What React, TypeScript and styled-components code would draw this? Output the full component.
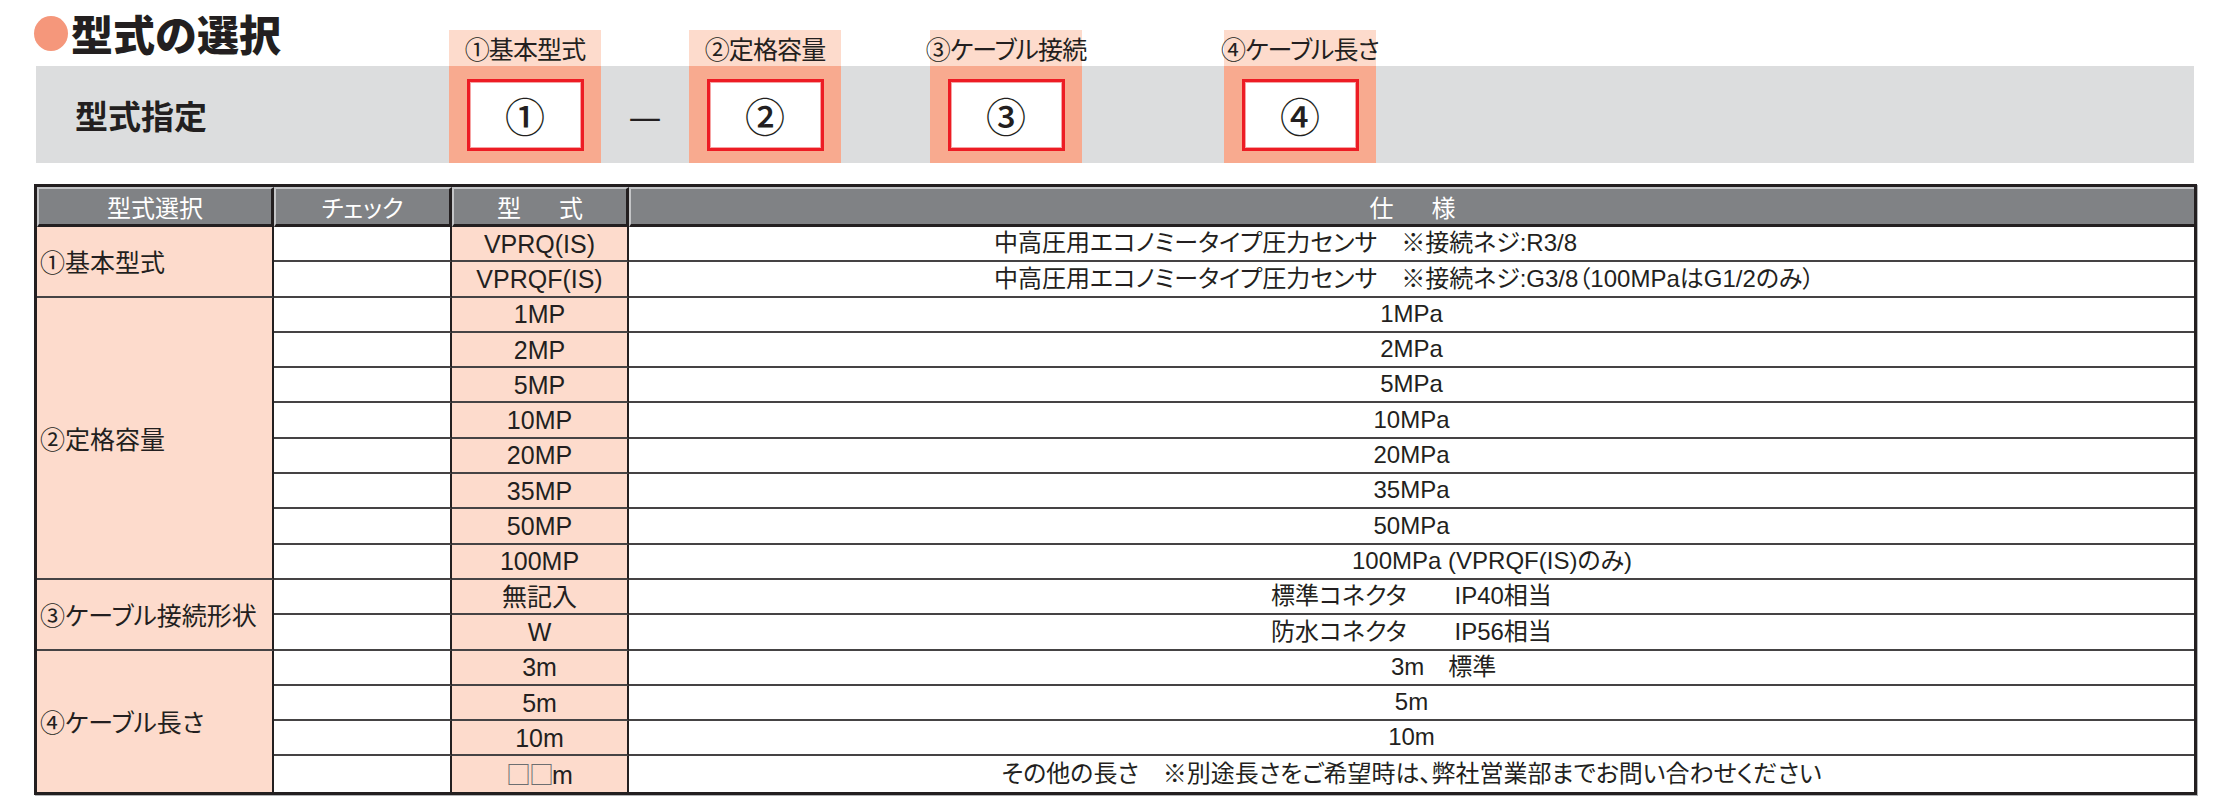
import React from "react";
import styled, { createGlobalStyle } from "styled-components";

const GlobalStyle = createGlobalStyle`
  html, body { margin: 0; padding: 0; background: #ffffff; }
  body {
    font-family: "Liberation Sans", "Noto Sans CJK JP", sans-serif;
    color: #231f20;
    font-feature-settings: "palt" 1;
  }
`;

const Page = styled.div`
  width: 2232px;
  height: 800px;
  overflow: hidden;
`;

const TopRow = styled.div`
  display: flex;
  align-items: flex-end;
  height: 66px;
`;

const TitleBlock = styled.div`
  align-self: stretch;
  width: 449px;
  box-sizing: border-box;
  padding: 0 0 0 34px;
  display: flex;
  align-items: center;
  gap: 3px;
`;

const Bullet = styled.span`
  width: 34px;
  height: 35px;
  border-radius: 50%;
  background: #f5977b;
  flex: none;
`;

const Title = styled.h1`
  margin: 0;
  font-family: "Noto Sans CJK JP", sans-serif;
  font-size: 42px;
  font-weight: 900;
  line-height: 1;
  letter-spacing: 0;
  font-feature-settings: normal;
  color: #231f20;
`;

const Gap = styled.div<{ $w: number }>`
  width: ${(p) => p.$w}px;
  flex: none;
  display: flex;
  align-items: center;
  justify-content: center;
`;

const Tab = styled.div`
  width: 152px;
  height: 36px;
  flex: none;
  background: #fddbcc;
  display: flex;
  align-items: center;
  justify-content: center;
  font-family: "Noto Sans CJK JP", sans-serif;
  font-size: 25px;
  line-height: 1;
  white-space: nowrap;
  letter-spacing: -0.9px;
`;

const Band = styled.div`
  margin-left: 36px;
  width: 2158px;
  height: 97px;
  background: #dcddde;
  display: flex;
`;

const BandLabel = styled.div`
  width: 413px;
  flex: none;
  box-sizing: border-box;
  padding-left: 39px;
  display: flex;
  align-items: center;
  font-family: "Noto Sans CJK JP", sans-serif;
  font-size: 33px;
  font-weight: 700;
  color: #231f20;
`;

const Slot = styled.div`
  width: 152px;
  flex: none;
  background: #f8aa8f;
  display: flex;
  align-items: center;
  justify-content: center;
`;

const NumberBox = styled.div`
  width: 117px;
  height: 72px;
  box-sizing: border-box;
  background: #ffffff;
  border: 3px solid #ed1c24;
  box-shadow: inset 0 0 0 1px #f6a4a4;
  display: flex;
  align-items: center;
  justify-content: center;
  font-family: "Noto Sans CJK JP", sans-serif;
  font-size: 40px;
  font-weight: 500;
  line-height: 1;
  color: #231f20;
`;

const Dash = styled.span`
  font-family: "Noto Sans CJK JP", sans-serif;
  font-size: 37px;
  line-height: 1;
  color: #231f20;
`;

const SpecTable = styled.table`
  margin: 21px 0 0 34px;
  box-sizing: border-box;
  width: 2163px;
  table-layout: fixed;
  border-collapse: separate;
  border-spacing: 0;
  border: 3px solid #231f20;
  box-shadow: 1px 1px 0 #b1b3b5;
`;

const HeadCell = styled.th<{ $last?: boolean }>`
  height: 40px;
  box-sizing: border-box;
  padding: 0;
  background: #808285;
  color: #ffffff;
  font-family: "Noto Sans CJK JP", sans-serif;
  font-size: 24px;
  font-weight: 400;
  line-height: 1;
  text-align: center;
  border-top: 2px solid #c4c5c7;
  border-left: 2px solid #c4c5c7;
  border-bottom: 3px solid #231f20;
  border-right: ${(p) => (p.$last ? "none" : "3px solid #231f20")};
`;

const Spaced = styled.span`
  letter-spacing: 7px;
  margin-right: -7px;
`;

const BodyRow = styled.tr`
  height: 35.3px;
`;

const cellLine = (last?: boolean) => (last ? "none" : "2px solid #454344");

const GroupCell = styled.td<{ $last?: boolean }>`
  background: #fddbcc;
  padding: 0 0 0 3px;
  font-family: "Noto Sans CJK JP", sans-serif;
  font-size: 25px;
  line-height: 1.2;
  text-align: left;
  vertical-align: middle;
  white-space: nowrap;
  border-right: 2px solid #231f20;
  border-bottom: ${(p) => cellLine(p.$last)};
`;

const CheckCell = styled.td<{ $last?: boolean }>`
  background: #ffffff;
  padding: 0;
  border-right: 2px solid #231f20;
  border-bottom: ${(p) => cellLine(p.$last)};
`;

const ModelCell = styled.td<{ $last?: boolean }>`
  background: #fddbcc;
  padding: 0;
  font-size: 25px;
  line-height: 1.2;
  text-align: center;
  vertical-align: middle;
  white-space: nowrap;
  border-right: 2px solid #231f20;
  border-bottom: ${(p) => cellLine(p.$last)};
`;

const Blank = styled.span`
  font-family: "Noto Sans CJK JP", sans-serif;
  font-feature-settings: normal;
  color: #6d6e71;
  font-size: 25px;
  letter-spacing: -2px;
`;

const SpecCell = styled.td<{ $last?: boolean; $indent?: number }>`
  background: #ffffff;
  padding: 0 0 0 ${(p) => p.$indent ?? 0}px;
  font-size: 24px;
  line-height: 1.2;
  text-align: ${(p) => (p.$indent ? "left" : "center")};
  vertical-align: middle;
  white-space: nowrap;
  border-bottom: ${(p) => cellLine(p.$last)};
`;

type Row = { model: React.ReactNode; spec: string; indent?: number };
type Group = { label: string; rows: Row[] };

const groups: Group[] = [
  {
    label: "①基本型式",
    rows: [
      { model: "VPRQ(IS)", spec: "中高圧用エコノミータイプ圧力センサ　※接続ネジ:R3/8", indent: 365 },
      { model: "VPRQF(IS)", spec: "中高圧用エコノミータイプ圧力センサ　※接続ネジ:G3/8（100MPaはG1/2のみ）", indent: 365 },
    ],
  },
  {
    label: "②定格容量",
    rows: [
      { model: "1MP", spec: "1MPa" },
      { model: "2MP", spec: "2MPa" },
      { model: "5MP", spec: "5MPa" },
      { model: "10MP", spec: "10MPa" },
      { model: "20MP", spec: "20MPa" },
      { model: "35MP", spec: "35MPa" },
      { model: "50MP", spec: "50MPa" },
      { model: "100MP", spec: "100MPa (VPRQF(IS)のみ)", indent: 723 },
    ],
  },
  {
    label: "③ケーブル接続形状",
    rows: [
      { model: "無記入", spec: "標準コネクタ　　IP40相当" },
      { model: "W", spec: "防水コネクタ　　IP56相当" },
    ],
  },
  {
    label: "④ケーブル長さ",
    rows: [
      { model: "3m", spec: "3m　標準", indent: 762 },
      { model: "5m", spec: "5m" },
      { model: "10m", spec: "10m" },
      {
        model: (
          <>
            <Blank>□□</Blank>m
          </>
        ),
        spec: "その他の長さ　※別途長さをご希望時は、弊社営業部までお問い合わせください",
      },
    ],
  },
];

const slots = [
  { gap: 0, label: "①基本型式", num: "①" },
  { gap: 88, label: "②定格容量", num: "②", dash: true },
  { gap: 89, label: "③ケーブル接続", num: "③" },
  { gap: 142, label: "④ケーブル長さ", num: "④" },
];

export default function App() {
  return (
    <Page>
      <GlobalStyle />
      <TopRow>
        <TitleBlock>
          <Bullet />
          <Title>型式の選択</Title>
        </TitleBlock>
        {slots.map((s) => (
          <React.Fragment key={s.label}>
            {s.gap > 0 && <Gap $w={s.gap} />}
            <Tab>{s.label}</Tab>
          </React.Fragment>
        ))}
      </TopRow>
      <Band>
        <BandLabel>型式指定</BandLabel>
        {slots.map((s) => (
          <React.Fragment key={s.num}>
            {s.gap > 0 && <Gap $w={s.gap}>{s.dash && <Dash>—</Dash>}</Gap>}
            <Slot>
              <NumberBox>{s.num}</NumberBox>
            </Slot>
          </React.Fragment>
        ))}
      </Band>
      <SpecTable>
        <colgroup>
          <col style={{ width: 237 }} />
          <col style={{ width: 178 }} />
          <col style={{ width: 177 }} />
          <col />
        </colgroup>
        <thead>
          <tr>
            <HeadCell>型式選択</HeadCell>
            <HeadCell>チェック</HeadCell>
            <HeadCell>
              <Spaced>型　式</Spaced>
            </HeadCell>
            <HeadCell $last>
              <Spaced>仕　様</Spaced>
            </HeadCell>
          </tr>
        </thead>
        <tbody>
          {groups.map((g, gi) =>
            g.rows.map((r, ri) => {
              const lastGroup = gi === groups.length - 1;
              const last = lastGroup && ri === g.rows.length - 1;
              return (
                <BodyRow key={`${gi}-${ri}`}>
                  {ri === 0 && (
                    <GroupCell rowSpan={g.rows.length} $last={lastGroup}>
                      {g.label}
                    </GroupCell>
                  )}
                  <CheckCell $last={last} />
                  <ModelCell $last={last}>{r.model}</ModelCell>
                  <SpecCell $last={last} $indent={r.indent}>
                    {r.spec}
                  </SpecCell>
                </BodyRow>
              );
            })
          )}
        </tbody>
      </SpecTable>
    </Page>
  );
}
